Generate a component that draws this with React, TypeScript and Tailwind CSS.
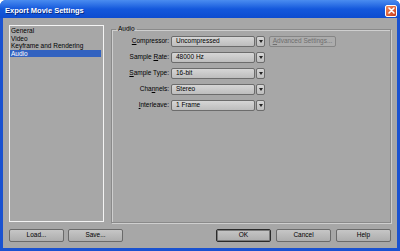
import React from "react";

const font = { fontFamily: '"Liberation Sans", Arial, sans-serif' };

function Dropdown({ value }: { value: string }) {
  return (
    <div className="flex h-[11px] w-[94px] gap-[1px]">
      <div className="flex flex-1 items-center rounded-[2px] border border-[#6c6c6c] bg-gradient-to-b from-[#d6d6d6] to-[#bdbdbd] pl-[4px] text-[6.5px] leading-none text-black">
        {value}
      </div>
      <div className="flex w-[9px] items-center justify-center rounded-[2px] border border-[#6c6c6c] bg-gradient-to-b from-[#d6d6d6] to-[#bdbdbd]">
        <svg width="4" height="3" viewBox="0 0 4 3">
          <path d="M0 0 H4 L2 3 Z" fill="#222" />
        </svg>
      </div>
    </div>
  );
}

function Row({ label, value, extra }: { label: React.ReactNode; value: string; extra?: React.ReactNode }) {
  return (
    <div className="flex h-[11px] items-center">
      <div className="w-[59px] pr-[2px] text-right text-[6.5px] leading-none text-black">{label}</div>
      <Dropdown value={value} />
      {extra}
    </div>
  );
}

function Btn({ children, def }: { children: React.ReactNode; def?: boolean }) {
  return (
    <div
      className={
        "flex h-[13px] w-[55px] items-center justify-center rounded-[2px] bg-gradient-to-b from-[#c6c6c6] to-[#adadad] text-[6.5px] leading-none text-black " +
        (def ? "border border-[#2a2a2a] shadow-[inset_0_0_0_1px_#7a7a7a]" : "border border-[#6a6a6a]")
      }
    >
      {children}
    </div>
  );
}

export default function App() {
  return (
    <div style={font} className="flex h-[251px] w-[400px] flex-col overflow-hidden rounded-t-[6px] bg-[#1a52d0]">
      {/* Title bar */}
      <div className="flex h-[18px] shrink-0 items-center justify-between bg-gradient-to-b from-[#4a8cf0] via-[#1458dc] to-[#0d4cd0] pl-[5px] pr-[3px]">
        <span className="mt-[3px] text-[7.5px] font-bold leading-none text-white [text-shadow:1px_1px_0_#0a2a80]">
          Export Movie Settings
        </span>
        <div className="mt-[3px] flex h-[12px] w-[12px] items-center justify-center rounded-[2px] border border-white bg-gradient-to-br from-[#f08a5c] to-[#c83818]">
          <svg width="7" height="7" viewBox="0 0 7 7">
            <path d="M1 1 L6 6 M6 1 L1 6" stroke="white" strokeWidth="1.6" strokeLinecap="round" />
          </svg>
        </div>
      </div>
      {/* Body */}
      <div className="mx-[3px] mb-[3px] flex flex-1 flex-col bg-[#a7a7a7] px-[6px] pb-[6px] pt-[7px]">
        <div className="flex flex-1 gap-[7px]">
          {/* List */}
          <div className="w-[95px] border border-[#f4f4f4] bg-[#a7a7a7] pt-[1px] pr-[2px] text-[6.5px] text-black">
            <div className="h-[7.5px] pl-[1px] leading-[7.5px]">General</div>
            <div className="h-[7.5px] pl-[1px] leading-[7.5px]">Video</div>
            <div className="h-[7.5px] pl-[1px] leading-[7.5px]">Keyframe and Rendering</div>
            <div className="h-[7.5px] bg-[#3262c0] pl-[1px] leading-[7.5px] text-white">Audio</div>
          </div>
          {/* Group */}
          <fieldset className="mb-[-1px] flex-1 border border-[#8a8a8a] px-0 pb-0 pt-[3px] shadow-[inset_1px_1px_0_#cfcfcf,1px_1px_0_#cfcfcf]">
            <legend className="ml-[4px] px-[2px] text-[6.5px] leading-[8px] text-black">Audio</legend>
            <div className="flex flex-col gap-[5px]">
              <Row
                label={<><u>C</u>ompressor:</>}
                value="Uncompressed"
                extra={
                  <div className="ml-[4px] flex h-[11px] w-[67px] items-center justify-center rounded-[2px] border border-[#858585] bg-[#acacac] text-[6.5px] leading-none text-[#6e6e6e]">
                    <span><u>A</u>dvanced Settings...</span>
                  </div>
                }
              />
              <Row label={<>Sample <u>R</u>ate:</>} value="48000 Hz" />
              <Row label={<><u>S</u>ample Type:</>} value="16-bit" />
              <Row label={<>Cha<u>n</u>nels:</>} value="Stereo" />
              <Row label={<><u>I</u>nterleave:</>} value="1 Frame" />
            </div>
          </fieldset>
        </div>
        {/* Buttons */}
        <div className="mt-[7px] flex items-center justify-between">
          <div className="flex gap-[4px]">
            <Btn>Load...</Btn>
            <Btn>Save...</Btn>
          </div>
          <div className="flex gap-[5px]">
            <Btn def>OK</Btn>
            <Btn>Cancel</Btn>
            <Btn>Help</Btn>
          </div>
        </div>
      </div>
    </div>
  );
}
